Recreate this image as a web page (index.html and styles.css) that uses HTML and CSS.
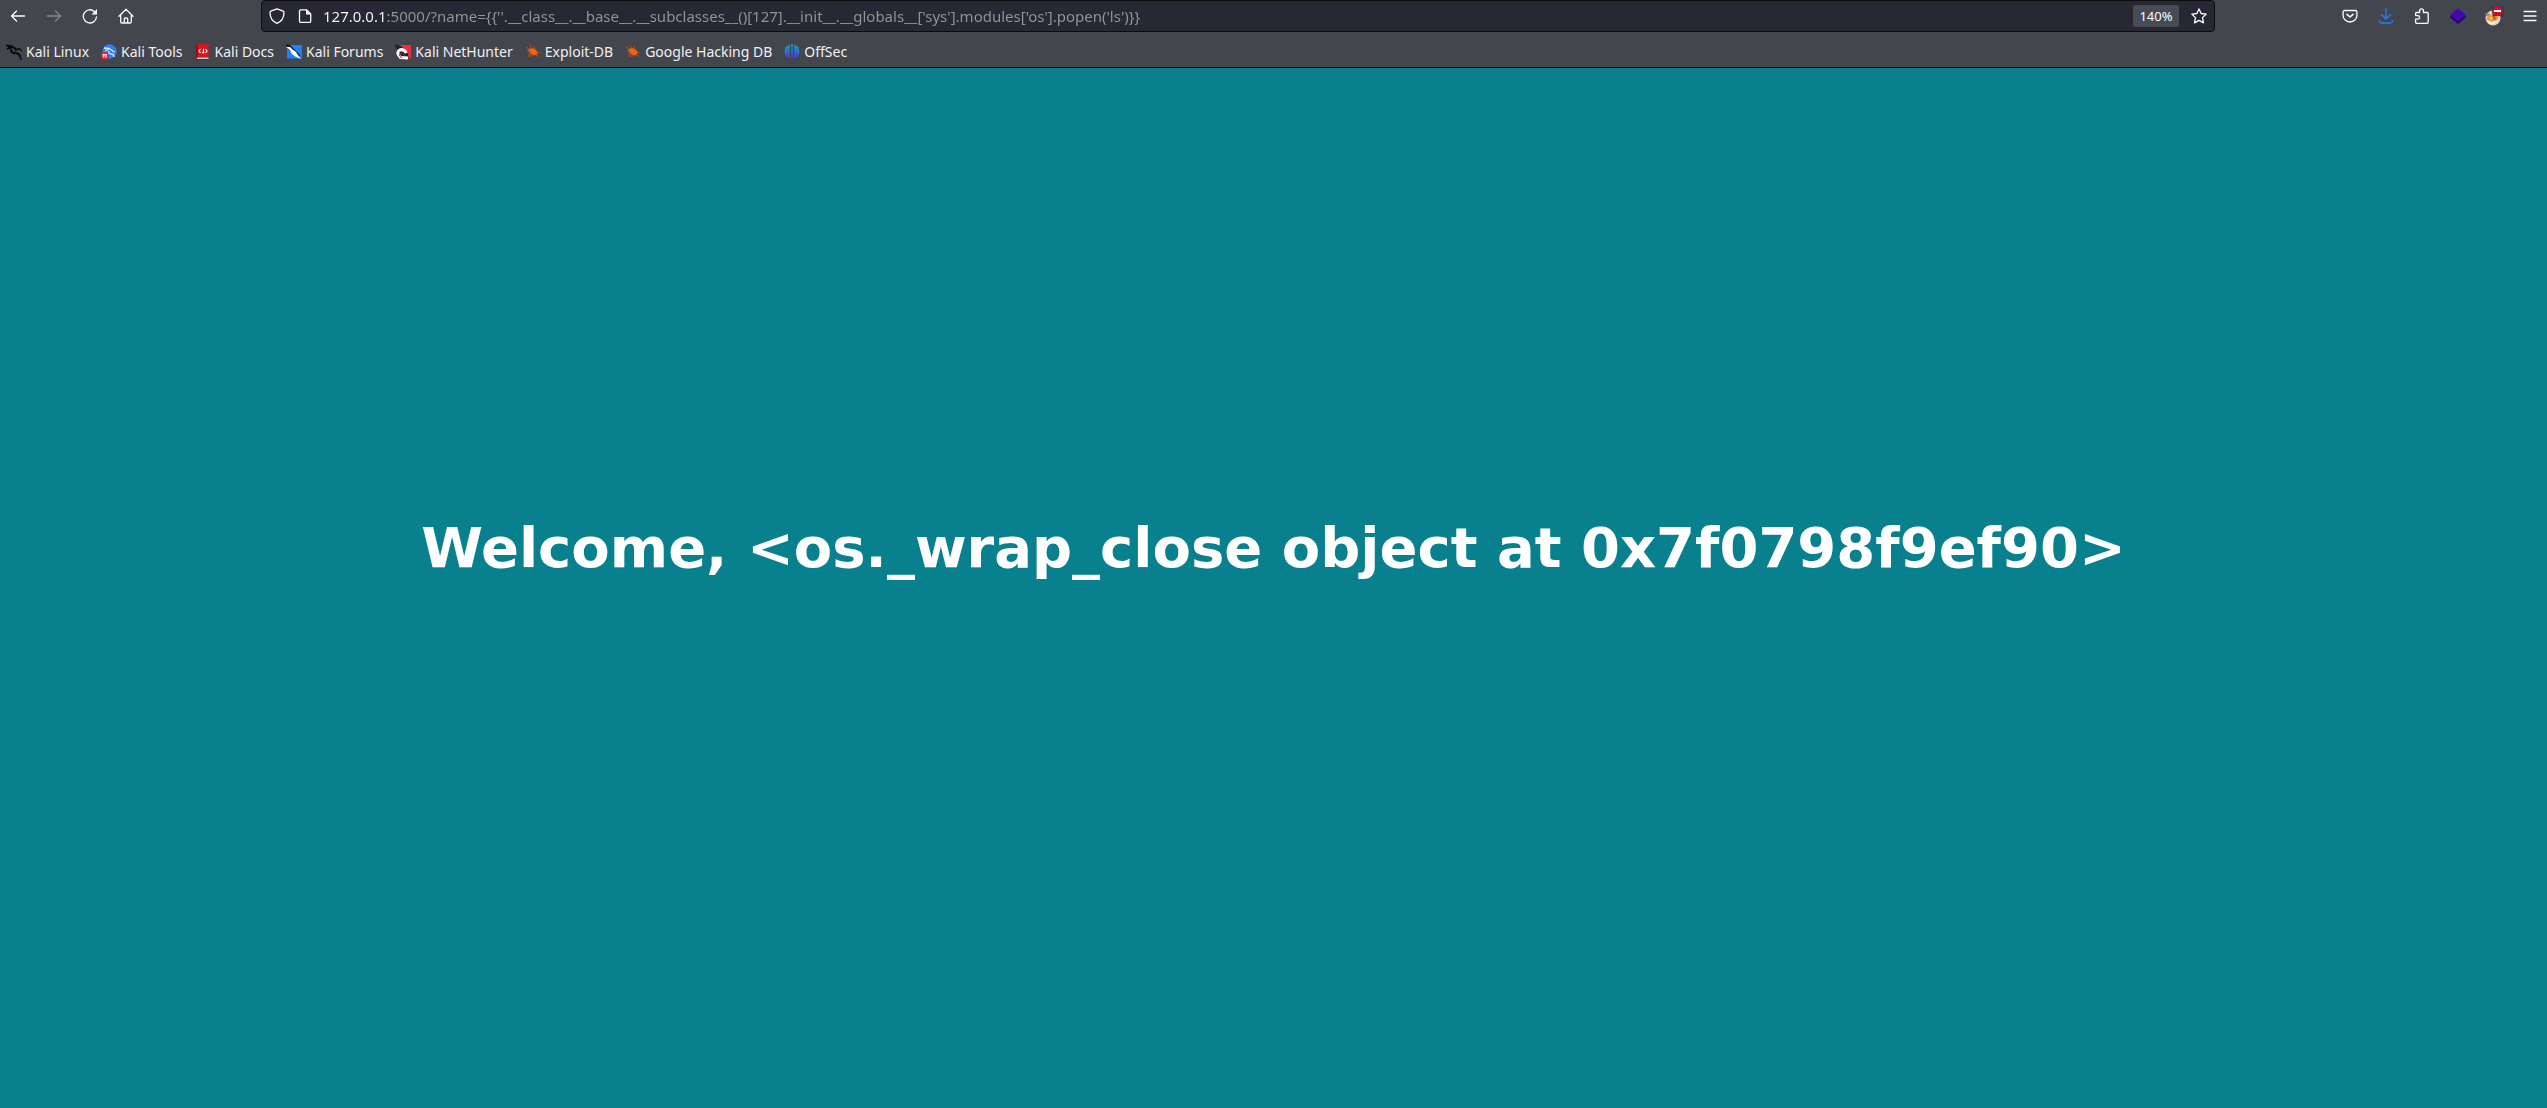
FILE: index.html
```html
<!DOCTYPE html>
<html lang="en">
<head>
<meta charset="utf-8">
<title>Welcome</title>
<link rel="stylesheet" href="styles.css">
</head>
<body>
<header class="chrome">
  <div class="navbar">
    <nav class="tools" aria-label="History">
      <button class="tool" type="button" aria-label="Back"><svg class="icon" viewBox="0 0 16 16"><path d="M14.500 8H1.500M6.500 3 1.500 8l5 5"/></svg></button>
      <button class="tool" type="button" aria-label="Forward" disabled><svg class="icon" viewBox="0 0 16 16"><path d="M1.500 8h13M9.500 3l5 5-5 5"/></svg></button>
      <button class="tool" type="button" aria-label="Reload"><svg class="icon" viewBox="0 0 16 16"><path d="M14.500 9a6.600 6.600 0 1 1-2.200-5.600L14 5"/><path class="solid" d="M15 1v5.500h-5.500z"/></svg></button>
      <button class="tool" type="button" aria-label="Home"><svg class="icon" viewBox="0 0 16 16"><path d="M1 8.200 8 1.300l7 6.900M2.700 7v6.800q0 1.200 1.200 1.200h8.200q1.200 0 1.200-1.200V7M6.300 15v-4q0-1 1-1h1.400q1 0 1 1v4"/></svg></button>
    </nav>
    <form class="address">
      <svg class="icon" viewBox="0 0 16 16"><path d="M8 .9 14.200 3.200Q15 3.500 15 4.500C15 10 12.500 13.500 8 15.300 3.500 13.500 1 10 1 4.500Q1 3.500 1.800 3.200z"/></svg>
      <svg class="icon" viewBox="0 0 16 16"><path d="M3.700 1.800H9.500L13.700 6v7.200q0 1.200-1.200 1.200H3.700q-1.200 0-1.200-1.200V3q0-1.200 1.200-1.200z"/><path class="solid" d="M9 1.800V6.500h4.700z"/></svg>
      <input class="url" type="text" aria-label="Address" spellcheck="false" value="127.0.0.1:5000/?name={{''.__class__.__base__.__subclasses__()[127].__init__.__globals__['sys'].modules['os'].popen('ls')}}">
      <button class="zoom" type="button">140%</button>
      <button class="star" type="button" aria-label="Bookmark this page"><svg class="icon" viewBox="0 0 16 16"><path d="m8 .9 2.100 4.600 5.100.6-3.700 3.500 1 5.300L8 12.400l-4.500 2.500 1-5.300L.8 6.100l5.100-.6z"/></svg></button>
    </form>
    <div class="tools tools-end">
      <button class="tool" type="button" aria-label="Pocket"><svg class="icon" viewBox="0 0 16 16"><path d="M2.600 2.500h10.800q1.500 0 1.500 1.500v3.500a6.900 6.500 0 0 1-13.800 0V4q0-1.500 1.500-1.500z"/><path class="bold" d="M5 6.300 8 9l3-2.700"/></svg></button>
      <button class="tool download" type="button" aria-label="Downloads"><svg class="icon" viewBox="0 0 16 16"><path d="M8 .5v10.500M3.500 6.500 8 11l4.500-4.500M1.700 12.300v1.200q0 1.500 1.500 1.500h9.600q1.500 0 1.500-1.500v-1.200"/></svg></button>
      <button class="tool" type="button" aria-label="Extensions"><svg class="icon" viewBox="0 0 16 16"><path d="M2.600 15.300q-1 0-1-1v-3.100h2.200a1.800 1.800 0 0 0 0-3.600H1.600V5.500q0-1 1-1h3V2.800a1.900 1.900 0 0 1 3.800 0v1.700h3.800q1 0 1 1v8.800q0 1-1 1z"/></svg></button>
      <button class="tool" type="button" aria-label="Wappalyzer"><svg class="icon fill" viewBox="0 0 16 16"><path fill="#210175" d="M0 9.200 8 16l8-6.800-1.500-1.700h-13z"/><path fill="#4608ad" d="m8 .3 8 6.600-8 6.600-8-6.600z"/></svg></button>
      <button class="tool" type="button" aria-label="FoxyProxy"><svg class="avatar" viewBox="0 0 20 20"><circle cx="9" cy="12" r="7.500" fill="#ded6ca"/><path fill="#8b8173" d="m1 7 5 1-2 3z"/><path fill="#f09a3c" d="M2.500 14Q3 8 9 8l6-1q0 6-3 8l-5 2-2-3z"/><path fill="#fff0dc" d="m4 15 4 1 5-2-3 4H6zM6 11l3 1-2 1z"/><path fill="#b85f1f" d="m8 10 4-1-1 3 2 1-3 1z"/><path fill="#3b3c41" d="M7 0h13v10H9z"/><circle cx="13.500" cy="5" r="5" fill="#c8102e"/><path fill="#fff" d="M10 4h7v2h-7z"/></svg></button>
      <button class="tool tool-last" type="button" aria-label="Menu"><svg class="icon" viewBox="0 0 16 16"><path d="M2 3.500h12M2 8h12M2 12.500h12"/></svg></button>
    </div>
  </div>
  <nav class="bookmarks" aria-label="Bookmarks">
    <a class="bookmark" href="#"><svg class="favicon" viewBox="0 0 16 16"><g fill="none" stroke="#080909"><path stroke-width="2" d="M0 1.500 6 2.500l4 2.500M5.500 5q-1.500 4 3.500 4 4 0 5 3.500"/><path stroke-width="1.400" d="M1 5l5-1.500M9 6.500l4-2 3 2.500M13.500 11l1.800 5M2 3.500h4"/></g></svg>Kali Linux</a>
    <a class="bookmark" href="#"><svg class="favicon" viewBox="0 0 16 16"><circle cx="8.500" cy="7.500" r="7.200" fill="#2f7df0"/><path fill="none" stroke="#d5e6ff" stroke-width="1.300" d="m3 4 5 .5 4 2.500M4 7l4-2M8 7q-1 3 2 3t3 3M11 7l3 1"/><circle cx="3.700" cy="12" r="3.900" fill="#e8202c"/><path fill="none" stroke="#fff" stroke-width="1" d="M1.500 10.700h4.500M2.800 10.700v3M5 10.700v3"/></svg>Kali Tools</a>
    <a class="bookmark" href="#"><svg class="favicon" viewBox="0 0 16 16"><path fill="#d5171c" d="M2 0h11.500v13.500H2z"/><path fill="#7f0c10" d="M1 1h1.500v13H1z"/><path fill="#c9c9cc" d="M2 13.500h11.500V15H2z"/><path fill="#9f1015" d="M1 15h12.500v1H1z"/><path fill="none" stroke="#fff" stroke-width="1.200" d="M5.500 5 4 7l1.500 2M10.500 5 12 7l-1.500 2M7 8.500q2 1 1.500-1T9 5"/></svg>Kali Docs</a>
    <a class="bookmark" href="#"><svg class="favicon" viewBox="0 0 16 16"><path fill="#2180f8" d="M1 1h15v13.500H1z"/><path fill="#111a27" d="m0 0 4 1 10 10-1 3L1 4z"/><path fill="#fff" d="m0 3 4 0 2 2 4 3 2 3 3 4-5-2-4-3-2-4z"/></svg>Kali Forums</a>
    <a class="bookmark" href="#"><svg class="favicon" viewBox="0 0 16 16"><path fill="#f02d3a" d="M3 1h13v13.500h-3z"/><path fill="#202226" d="m0 0 6 2 6 5 2 7-11-3z"/><path fill="none" stroke="#fff" stroke-width="3" d="M13 14 5.500 13.500Q1 9 4 6.500q4-2.500 7.500 2.500"/><path fill="none" stroke="#b7202b" d="M10 12q-3-4-5-2t2 4"/></svg>Kali NetHunter</a>
    <a class="bookmark" href="#"><svg class="favicon" viewBox="0 0 16 16"><path fill="#f26411" d="M3 5.500q3-2 6-1l3.500 3-.5 3L9 11.500l-4-2z"/><path fill="none" stroke="#c7581b" stroke-width=".8" d="m1 3 4 3M2 7 6 8M5 1.500 7 5M9 2l1 4M8 12H3M11 11l3 1.500M12 8.500l3.500.5M7 9.500l-4 1"/></svg>Exploit-DB</a>
    <a class="bookmark" href="#"><svg class="favicon" viewBox="0 0 16 16"><path fill="#f26411" d="M3 5.500q3-2 6-1l3.500 3-.5 3L9 11.500l-4-2z"/><path fill="none" stroke="#c7581b" stroke-width=".8" d="m1 3 4 3M2 7 6 8M5 1.500 7 5M9 2l1 4M8 12H3M11 11l3 1.500M12 8.500l3.500.5M7 9.500l-4 1"/></svg>Google Hacking DB</a>
    <a class="bookmark" href="#"><svg class="favicon" viewBox="0 0 16 16"><defs><linearGradient id="offsec" gradientUnits="userSpaceOnUse" x1="0" y1="0" x2="0" y2="16"><stop stop-color="#16a3c0"/><stop offset=".5" stop-color="#2e6bd0"/><stop offset="1" stop-color="#6a20c8"/></linearGradient></defs><path fill="url(#offsec)" d="M5.800.7v14Q.5 13 .5 7.500T5.800.7zM10.200.7v14q5.300-1.700 5.300-7.200T10.200.7zM7.200 0h1.600v16H7.200z"/></svg>OffSec</a>
  </nav>
</header>
<main class="page">
  <h1 class="welcome">Welcome, &lt;os._wrap_close object at 0x7f0798f9ef90&gt;</h1>
</main>
</body>
</html>
```
FILE: styles.css
```css
* {
  box-sizing: border-box;
}

body {
  margin: 0;
  min-height: 100vh;
  display: flex;
  flex-direction: column;
  background: #08808d;
  font-family: "Noto Sans", sans-serif;
}

button {
  border: 0;
  padding: 0;
  background: none;
  color: inherit;
  font: inherit;
}

.chrome {
  background: #44464d;
  border-bottom: 1px solid #0c0c0d;
  color: #fbfbfe;
}

.navbar {
  display: flex;
  height: 32px;
}

.tools {
  display: flex;
}

.tool {
  display: flex;
  align-items: center;
  justify-content: center;
  width: 36px;
  height: 32px;
}

.tool-last {
  width: 35px;
}

.tool:disabled {
  color: #86878c;
}

.download {
  color: #2a7bf6;
}

.icon {
  flex: none;
  width: 16px;
  height: 16px;
  fill: none;
  stroke: currentColor;
  stroke-width: 1.3;
  stroke-linecap: round;
  stroke-linejoin: round;
}

.icon.fill {
  stroke: none;
}

.icon .solid {
  fill: currentColor;
  stroke: none;
}

.icon .bold {
  stroke-width: 1.6;
}

.avatar {
  width: 20px;
  height: 20px;
}

.address {
  flex: 1;
  min-width: 0;
  display: flex;
  align-items: center;
  gap: 12px;
  margin: 0 117px;
  padding: 0 7px;
  border: 1px solid #0c0c0d;
  border-radius: 4px;
  background: #272833;
}

.url {
  flex: 1;
  min-width: 0;
  height: 28px;
  margin-left: -2px;
  padding: 0;
  border: 0;
  outline: 0;
  font: 15px/28px "Noto Sans", sans-serif;
  color: #94959b;
  background: linear-gradient(90deg, #fbfbfe 64px, #94959b 64px);
  background-clip: text;
  -webkit-background-clip: text;
  -webkit-text-fill-color: transparent;
}

.zoom {
  width: 46px;
  height: 22px;
  border-radius: 3px;
  background: #494b54;
  font-size: 13px;
  line-height: 22px;
}

.star {
  display: flex;
}

.bookmarks {
  display: flex;
  gap: 12px;
  height: 35px;
  padding: 4px 6px 0;
}

.bookmark {
  display: flex;
  align-items: center;
  gap: 4px;
  color: #f0f0f4;
  font-size: 14px;
  line-height: 20px;
  text-decoration: none;
  white-space: nowrap;
}

.favicon {
  flex: none;
  width: 16px;
  height: 16px;
}

.page {
  flex: 1;
  display: flex;
  align-items: center;
  justify-content: center;
  padding-bottom: 81px;
}

.welcome {
  margin: 0;
  color: #fff;
  font: bold 56px "DejaVu Sans", sans-serif;
  text-align: center;
}
```
